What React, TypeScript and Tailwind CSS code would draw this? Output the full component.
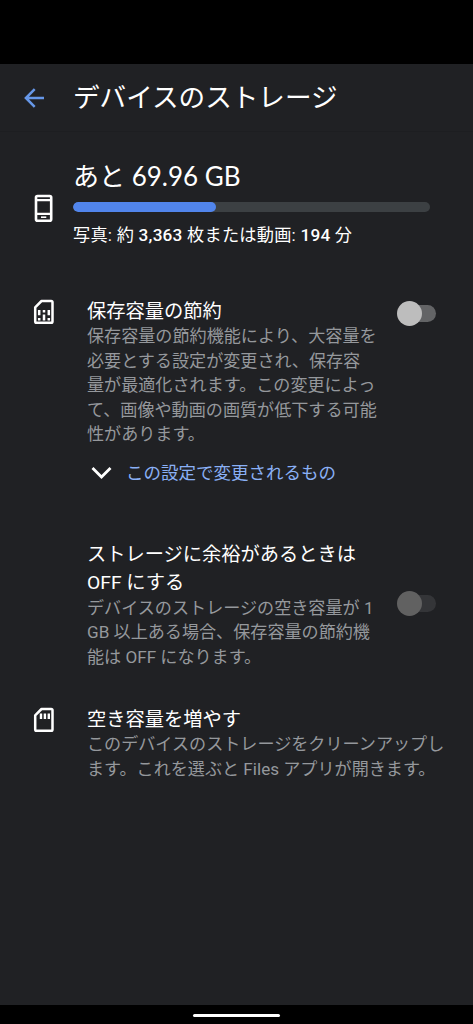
import { ReactNode } from "react";

function Lines({ lines }: { lines: string[] }) {
  return (
    <>
      {lines.map((line) => (
        <span key={line} className="block whitespace-nowrap">
          {line}
        </span>
      ))}
    </>
  );
}

function Toggle({ disabled = false }: { disabled?: boolean }) {
  return (
    <button
      type="button"
      role="switch"
      aria-checked={false}
      disabled={disabled}
      className={`flex h-[17px] w-[36px] shrink-0 items-center rounded-full ${
        disabled ? "bg-[#343538]" : "bg-[#636466]"
      }`}
    >
      <span
        className={`-ml-[3px] size-[25px] shrink-0 rounded-full ${
          disabled ? "bg-[#616161]" : "bg-[#bdbdbd]"
        }`}
      />
    </button>
  );
}

function Row({
  icon,
  title,
  description,
  children,
}: {
  icon?: ReactNode;
  title: string[];
  description: string[];
  children?: ReactNode;
}) {
  return (
    <div className="flex">
      <div className="w-[87px] shrink-0 pl-[30px]">{icon}</div>
      <div className="w-[310px] shrink-0 pt-px">
        <h2 className="text-[19.25px] leading-[28px] text-white">
          <Lines lines={title} />
        </h2>
        <p className="-mt-[1.6px] text-[17.1px] leading-[24.4px] text-[#95989c]">
          <Lines lines={description} />
        </p>
      </div>
      {children}
    </div>
  );
}

function PhoneIcon() {
  return (
    <svg width="27" height="30" viewBox="0 0 27 30" fill="none" stroke="#fff">
      <rect x="6" y="3" width="15.2" height="24.8" rx="1.5" strokeWidth="2.6" />
      <path d="M6 7.1h15M6 20.8h15" strokeWidth="2.3" />
      <path d="M11 24.2h5.3" strokeWidth="1.6" />
    </svg>
  );
}

function SimIcon() {
  return (
    <svg width="27" height="30" viewBox="0 0 27 30" fill="none" stroke="#fff">
      <path
        d="M11.5 4h9.7c.8 0 1.3.5 1.3 1.3v19.2c0 .8-.5 1.3-1.3 1.3H6.5c-.8 0-1.3-.5-1.3-1.3V10.3z"
        strokeWidth="2.5"
        strokeLinejoin="round"
      />
      <path d="M9.2 13v5.3M14 13v2.4M18.8 13v5.3M9.2 21v2.5M14 17.5v6M18.8 21v2.5" strokeWidth="2.5" />
    </svg>
  );
}

function SdCardIcon() {
  return (
    <svg width="27" height="30" viewBox="0 0 27 30" fill="none" stroke="#fff">
      <path
        d="M11.5 4h9.7c.8 0 1.3.5 1.3 1.3v19.2c0 .8-.5 1.3-1.3 1.3H6.5c-.8 0-1.3-.5-1.3-1.3V10.3z"
        strokeWidth="2.5"
        strokeLinejoin="round"
      />
      <path d="M11 8.6v5.4M14.9 8.6v5.4M18.8 8.6v5.4" strokeWidth="2.4" />
    </svg>
  );
}

export default function App() {
  return (
    <div
      lang="ja"
      className="flex h-[1024px] w-[473px] flex-col overflow-hidden bg-black font-['Roboto','Noto_Sans_CJK_JP',sans-serif]"
    >
      <div className="h-16 shrink-0" />

      <div className="flex min-h-0 flex-1 flex-col bg-[#202124]">
        <header className="flex h-[68px] shrink-0 items-center border-b border-[#1d1e21]">
          <button type="button" aria-label="戻る" className="w-[73px] pl-[24px]">
            <svg width="21" height="20" viewBox="0 0 21 20" fill="none" stroke="#6697e8" strokeWidth="2.5">
              <path d="M20 10H2.5M10.7 1.2L1.9 10l8.8 8.8" />
            </svg>
          </button>
          <h1 className="text-[26.6px] leading-[38px] whitespace-nowrap text-white">
            デバイスのストレージ
          </h1>
        </header>

        <section className="flex h-[165px] shrink-0 pt-[24px]">
          <div className="w-[73px] shrink-0 pt-[37px] pl-[30px]">
            <PhoneIcon />
          </div>
          <div className="w-[357px]">
            <div className="font-['Lato','Noto_Sans_CJK_JP',sans-serif] text-[26px] leading-[40px] whitespace-nowrap text-white">
              あと 69.96 GB
            </div>
            <div className="mt-[6px] h-[10px] overflow-hidden rounded-full bg-[#3c4043]">
              <div className="h-full w-[40%] rounded-full bg-[#5185ec]" />
            </div>
            <p className="mt-[9px] text-[17.2px] leading-[28px] tracking-[0.22px] whitespace-nowrap text-white">
              写真: 約 <span className="font-medium">3,363</span> 枚または動画:{" "}
              <span className="font-medium">194</span> 分
            </p>
          </div>
        </section>

        <Row
          icon={<SimIcon />}
          title={["保存容量の節約"]}
          description={[
            "保存容量の節約機能により、大容量を",
            "必要とする設定が変更され、保存容",
            "量が最適化されます。この変更によっ",
            "て、画像や動画の画質が低下する可能",
            "性があります。",
          ]}
        >
          <div className="pt-[8px] pl-[3px]">
            <Toggle />
          </div>
        </Row>

        <button type="button" className="mt-[13px] flex h-[28px] shrink-0 items-center pl-[91px]">
          <svg width="21" height="14" viewBox="0 0 21 14" fill="none" stroke="#fff" strokeWidth="2.8">
            <path d="M1.5 2l9 9 9-9" />
          </svg>
          <span className="pl-[14px] text-[17.5px] leading-[28px] whitespace-nowrap text-[#8ab0f5]">
            この設定で変更されるもの
          </span>
        </button>

        <div className="mt-[53px]">
          <Row
            title={["ストレージに余裕があるときは", "OFF にする"]}
            description={[
              "デバイスのストレージの空き容量が 1",
              "GB 以上ある場合、保存容量の節約機",
              "能は OFF になります。",
            ]}
          >
            <div className="flex items-center pb-[2px] pl-[3px]">
              <Toggle disabled />
            </div>
          </Row>
        </div>

        <div className="mt-[36px]">
          <Row
            icon={<SdCardIcon />}
            title={["空き容量を増やす"]}
            description={[
              "このデバイスのストレージをクリーンアップし",
              "ます。これを選ぶと Files アプリが開きます。",
            ]}
          />
        </div>
      </div>

      <footer className="flex h-[19px] shrink-0 items-center justify-center pt-[2px]">
        <div className="h-[3px] w-[87px] rounded-full bg-white" />
      </footer>
    </div>
  );
}
